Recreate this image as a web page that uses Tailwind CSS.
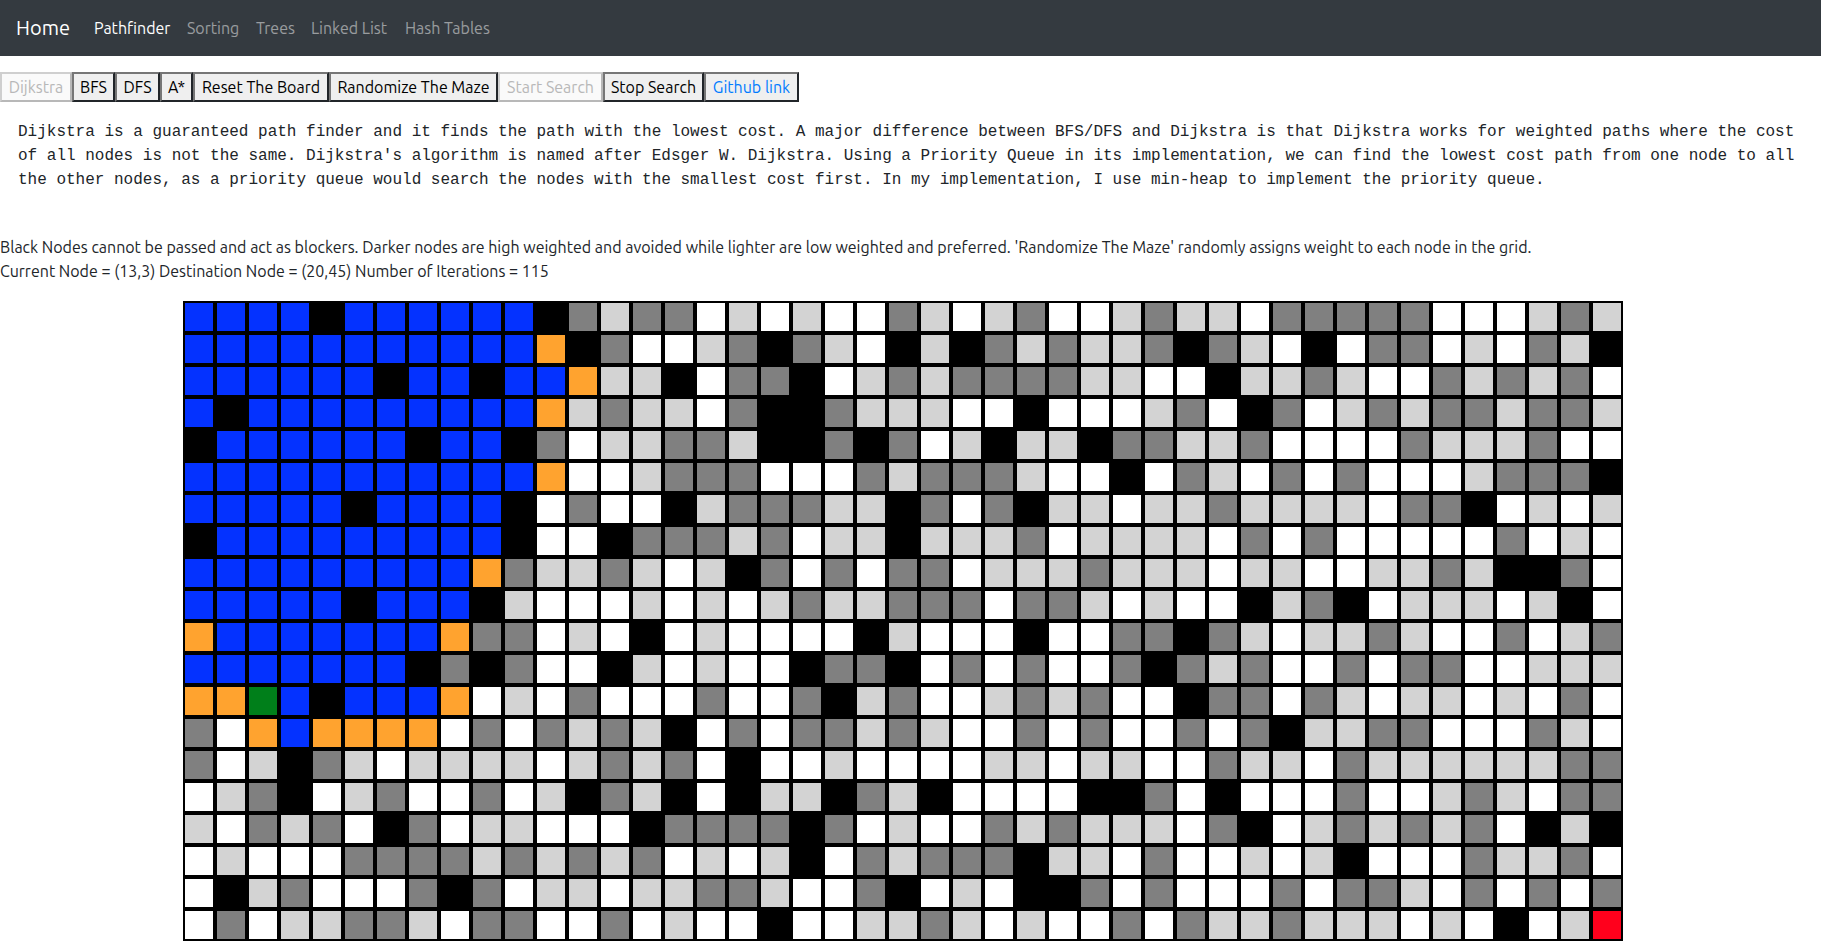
<!DOCTYPE html>
<html lang="en">
<head>
<meta charset="utf-8">
<meta name="viewport" content="width=device-width, initial-scale=1">
<title>Pathfinder</title>
<script src="https://cdn.jsdelivr.net/npm/@tailwindcss/browser@4"></script>
</head>
<body class="bg-white font-['Ubuntu','Noto_Sans',sans-serif] text-base leading-6 text-[#212529]">
<nav class="flex h-14 items-center bg-[#343a40] px-4">
  <a href="#" class="mr-4 text-xl leading-[30px] text-white">Home</a>
  <ul class="flex">
    <li><a href="#" class="block w-[93px] px-2 py-2 whitespace-nowrap text-white">Pathfinder</a></li>
    <li><a href="#" class="block w-[69px] px-2 py-2 whitespace-nowrap text-white/50">Sorting</a></li>
    <li><a href="#" class="block w-[55px] px-2 py-2 whitespace-nowrap text-white/50">Trees</a></li>
    <li><a href="#" class="block w-[94px] px-2 py-2 whitespace-nowrap text-white/50">Linked List</a></li>
    <li><a href="#" class="block px-2 py-2 whitespace-nowrap text-white/50">Hash Tables</a></li>
  </ul>
</nav>
<main>
  <div class="mt-4 flex whitespace-nowrap text-black">
    <button disabled class="h-[30px] w-[72px] border-2 border-[#cfcfcf] border-r-[#b8b8b8] border-b-[#b8b8b8] bg-[#fafafa] text-[#b8b8b8]">Dijkstra</button>
    <button class="h-[30px] w-[43px] border-2 border-[#767676] border-r-[#212529] border-b-[#212529] bg-[#efefef]">BFS</button>
    <button class="h-[30px] w-[45px] border-2 border-[#767676] border-r-[#212529] border-b-[#212529] bg-[#efefef]">DFS</button>
    <button class="h-[30px] w-[33px] border-2 border-[#767676] border-r-[#212529] border-b-[#212529] bg-[#efefef]">A*</button>
    <button class="h-[30px] w-[136px] border-2 border-[#767676] border-r-[#212529] border-b-[#212529] bg-[#efefef]">Reset The Board</button>
    <button class="h-[30px] w-[169px] border-2 border-[#767676] border-r-[#212529] border-b-[#212529] bg-[#efefef]">Randomize The Maze</button>
    <button disabled class="h-[30px] w-[105px] border-2 border-[#cfcfcf] border-r-[#b8b8b8] border-b-[#b8b8b8] bg-[#fafafa] text-[#b8b8b8]">Start Search</button>
    <button class="h-[30px] w-[101px] border-2 border-[#767676] border-r-[#212529] border-b-[#212529] bg-[#efefef]">Stop Search</button>
    <a href="#" class="flex h-[30px] w-[95px] items-center justify-center border-2 border-[#767676] border-r-[#212529] border-b-[#212529] bg-[#efefef] text-[#007bff]">Github link</a>
  </div>
  <p class="mt-[18px] px-[18px] font-['Liberation_Mono',monospace]">Dijkstra is a guaranteed path finder and it finds the path with the lowest cost. A major difference between BFS/DFS and Dijkstra is that Dijkstra works for weighted paths where the cost of all nodes is not the same. Dijkstra's algorithm is named after Edsger W. Dijkstra. Using a Priority Queue in its implementation, we can find the lowest cost path from one node to all the other nodes, as a priority queue would search the nodes with the smallest cost first. In my implementation, I use min-heap to implement the priority queue.</p>
  <div class="mt-[43px]">
    <p>Black Nodes cannot be passed and act as blockers. Darker nodes are high weighted and avoided while lighter are low weighted and preferred. 'Randomize The Maze' randomly assigns weight to each node in the grid.</p>
    <p>Current Node = (13,3) Destination Node = (20,45) Number of Iterations = 115</p>
  </div>
  <div class="mt-[18px] flex justify-center pr-[15px]">
    <div id="board" class="grid shrink-0 grid-cols-[repeat(45,32px)]"></div>
  </div>
</main>
<script>
// One letter per node: B visited, O frontier, G start, R destination, K wall, W/L/D low to high weight
const rows = [
  "BBBBKBBBBBBKDLDDWLWLWWDLWLDWWLDLLWDDDDDWWWLDL",
  "BBBBBBBBBBBOKDWWLDKDLWKLKDLDLLDKDLWKWDDWLWDLK",
  "BBBBBBKBBKBBOLLKWDDKWLDLDDDDLLWWKLLDLWWDLDLDW",
  "BKBBBBBBBBBOLDLLWDKKDLLLWWKWWWLDWKDWLDLDDLDDL",
  "KBBBBBBKBBKDWLLDDLKKDKDWLKLLKDDLLDWWWWDLLLDWW",
  "BBBBBBBBBBBOWWLDDDWWWDLDDDLWWKWDLWDWDWWWLDDDK",
  "BBBBBKBBBBKWDWWKLDDDLLKDWDKLLWLLDLLLLWDDKWLWL",
  "KBBBBBBBBBKWWKDDDLDWLLKLLLDWLLLLWDWDWWWWWDWLW",
  "BBBBBBBBBODLLDLWLKDWDWDDWLLLDLLLWLLWWLLDLKKDW",
  "BBBBBKBBBKLWWWLWLWLDLLDDDWDDLWLWWKLDKWLLLWLKW",
  "OBBBBBBBODDWLWKWLWWWWKLWWWKWWDDKDLWLLDLWWDWLD",
  "BBBBBBBKDKDWWKLWLWWKDDKWDWDWWDKDLDWWDWDDWWLLL",
  "OOGBKBBBOWLWDWWWDWWDKLDWWLDLDWWKDDWDLWLLWLWDW",
  "DWOBOOOOWDWDLDLKWDWDDLDLWWDWDWWDWDKLLDDWWWDLW",
  "DWLKDLWLLLLWLDLDWKWWLWWWWLLWLLWWDLLWDLLLLLLDD",
  "WLDKWLDWWDWLKDLKWKLLKDLKWWWWKKDWKWWWDWWLDLWDD",
  "LWDLDWKDWLLWWWKDDDDKDWLWWDLDLLLWDKWLDLDLDWKLK",
  "WLWWWDDDDLDLDLDWLWLKWDLDDDKLLWDWWLWLKWWWDLLDW",
  "WKLDWWWDKDWLLWLLDDLWWDKWLWKKDWDWWWDWDDLWDWDWD",
  "WDWLLDDLWDDWWDWLWWKWWLLDLWLWWDWDLLDLLLWLWKWLR"
];
const styles = {
  B: "size-8 border-2 border-black bg-[#0432ff]",
  O: "size-8 border-2 border-black bg-[#ffa32f]",
  G: "size-8 border-2 border-black bg-[#007f1a]",
  R: "size-8 border-2 border-black bg-[#ff001c]",
  K: "size-8 border-2 border-black bg-black",
  W: "size-8 border-2 border-black bg-white",
  L: "size-8 border-2 border-black bg-[#d3d3d3]",
  D: "size-8 border-2 border-black bg-[#808080]"
};
const board = document.getElementById("board");
for (const row of rows) {
  for (const node of row) {
    const cell = document.createElement("div");
    cell.className = styles[node];
    board.append(cell);
  }
}
</script>
</body>
</html>
